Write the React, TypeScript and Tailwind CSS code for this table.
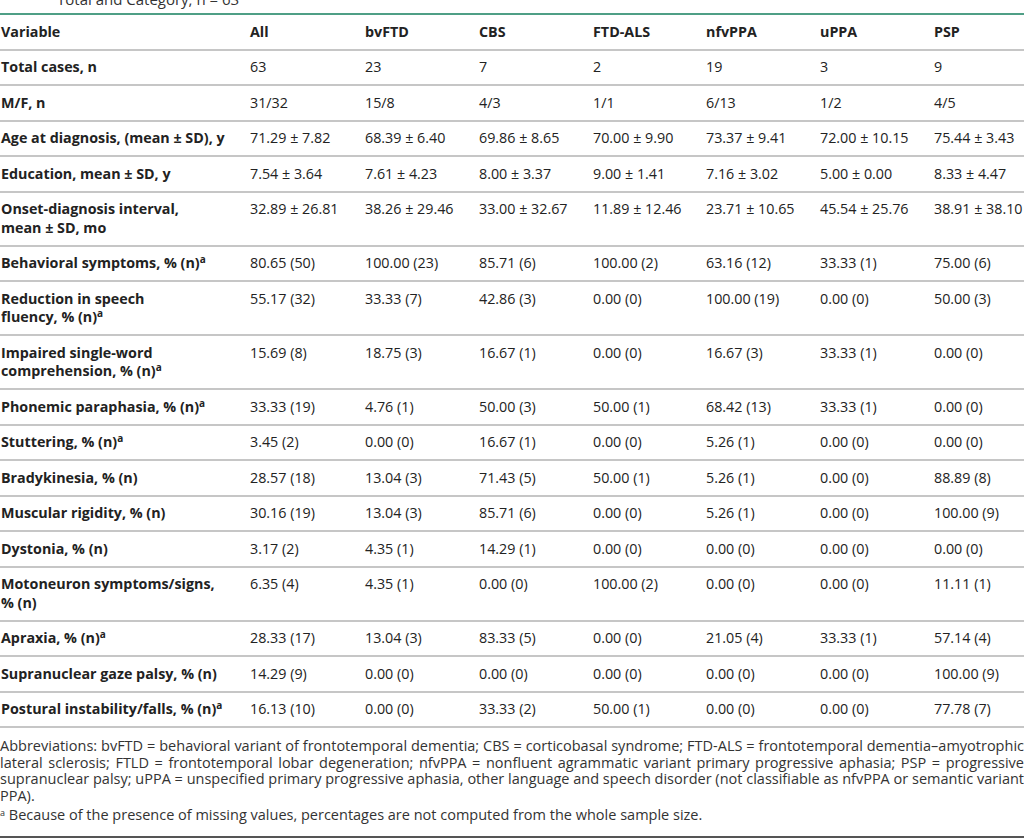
const cols = ["Variable", "All", "bvFTD", "CBS", "FTD-ALS", "nfvPPA", "uPPA", "PSP"];

type Row = { label: string[]; sup?: boolean; values: string[] };

const rows: Row[] = [
  { label: ["Total cases, n"], values: ["63", "23", "7", "2", "19", "3", "9"] },
  { label: ["M/F, n"], values: ["31/32", "15/8", "4/3", "1/1", "6/13", "1/2", "4/5"] },
  {
    label: ["Age at diagnosis, (mean ± SD), y"],
    values: ["71.29 ± 7.82", "68.39 ± 6.40", "69.86 ± 8.65", "70.00 ± 9.90", "73.37 ± 9.41", "72.00 ± 10.15", "75.44 ± 3.43"],
  },
  {
    label: ["Education, mean ± SD, y"],
    values: ["7.54 ± 3.64", "7.61 ± 4.23", "8.00 ± 3.37", "9.00 ± 1.41", "7.16 ± 3.02", "5.00 ± 0.00", "8.33 ± 4.47"],
  },
  {
    label: ["Onset-diagnosis interval,", "mean ± SD, mo"],
    values: ["32.89 ± 26.81", "38.26 ± 29.46", "33.00 ± 32.67", "11.89 ± 12.46", "23.71 ± 10.65", "45.54 ± 25.76", "38.91 ± 38.10"],
  },
  {
    label: ["Behavioral symptoms, % (n)"],
    sup: true,
    values: ["80.65 (50)", "100.00 (23)", "85.71 (6)", "100.00 (2)", "63.16 (12)", "33.33 (1)", "75.00 (6)"],
  },
  {
    label: ["Reduction in speech", "fluency, % (n)"],
    sup: true,
    values: ["55.17 (32)", "33.33 (7)", "42.86 (3)", "0.00 (0)", "100.00 (19)", "0.00 (0)", "50.00 (3)"],
  },
  {
    label: ["Impaired single-word", "comprehension, % (n)"],
    sup: true,
    values: ["15.69 (8)", "18.75 (3)", "16.67 (1)", "0.00 (0)", "16.67 (3)", "33.33 (1)", "0.00 (0)"],
  },
  {
    label: ["Phonemic paraphasia, % (n)"],
    sup: true,
    values: ["33.33 (19)", "4.76 (1)", "50.00 (3)", "50.00 (1)", "68.42 (13)", "33.33 (1)", "0.00 (0)"],
  },
  {
    label: ["Stuttering, % (n)"],
    sup: true,
    values: ["3.45 (2)", "0.00 (0)", "16.67 (1)", "0.00 (0)", "5.26 (1)", "0.00 (0)", "0.00 (0)"],
  },
  {
    label: ["Bradykinesia, % (n)"],
    values: ["28.57 (18)", "13.04 (3)", "71.43 (5)", "50.00 (1)", "5.26 (1)", "0.00 (0)", "88.89 (8)"],
  },
  {
    label: ["Muscular rigidity, % (n)"],
    values: ["30.16 (19)", "13.04 (3)", "85.71 (6)", "0.00 (0)", "5.26 (1)", "0.00 (0)", "100.00 (9)"],
  },
  {
    label: ["Dystonia, % (n)"],
    values: ["3.17 (2)", "4.35 (1)", "14.29 (1)", "0.00 (0)", "0.00 (0)", "0.00 (0)", "0.00 (0)"],
  },
  {
    label: ["Motoneuron symptoms/signs,", "% (n)"],
    values: ["6.35 (4)", "4.35 (1)", "0.00 (0)", "100.00 (2)", "0.00 (0)", "0.00 (0)", "11.11 (1)"],
  },
  {
    label: ["Apraxia, % (n)"],
    sup: true,
    values: ["28.33 (17)", "13.04 (3)", "83.33 (5)", "0.00 (0)", "21.05 (4)", "33.33 (1)", "57.14 (4)"],
  },
  {
    label: ["Supranuclear gaze palsy, % (n)"],
    values: ["14.29 (9)", "0.00 (0)", "0.00 (0)", "0.00 (0)", "0.00 (0)", "0.00 (0)", "100.00 (9)"],
  },
  {
    label: ["Postural instability/falls, % (n)"],
    sup: true,
    values: ["16.13 (10)", "0.00 (0)", "33.33 (2)", "50.00 (1)", "0.00 (0)", "0.00 (0)", "77.78 (7)"],
  },
];

const grid = "grid grid-cols-[249px_115px_114px_114px_113px_114px_114px_1fr]";

const App = () => {
  return (
    <div className="w-[1024px] h-[839px] overflow-hidden bg-white text-[#222] font-['Open_Sans',sans-serif]">
      {/* caption, cut off by the top of the shot */}
      <div className="-mt-[11px] h-[20px] pl-[57px] text-[15px] leading-[20px] text-[#333] whitespace-nowrap">Total and Category, n = 63</div>
      <div className="mt-[4px] h-[2px] bg-[#4f9f86]" />

      <div className={`${grid} border-b-2 border-[#c6c6c6] py-[7.5px] text-[14.3px] leading-[18.5px] font-bold`}>
        {cols.map((c) => (
          <div key={c} className="pl-[1px]">{c}</div>
        ))}
      </div>

      {rows.map((r) => (
        <div key={r.label.join(" ")} className={`${grid} border-b-2 border-[#c6c6c6] py-[7.5px] text-[14.3px] leading-[18.5px]`}>
          <div className="pl-[1px] font-bold whitespace-nowrap">
            {r.label.map((l, i) => (
              <div key={i}>
                {l}
                {r.sup && i === r.label.length - 1 && <sup className="text-[10px] font-bold">a</sup>}
              </div>
            ))}
          </div>
          {r.values.map((v, i) => (
            <div key={i} className="pl-[1px] whitespace-nowrap">{v}</div>
          ))}
        </div>
      ))}

      <div className="mt-[10px] text-[14.5px] leading-[16.5px] text-[#333]">
        <p className="text-justify">
          Abbreviations: bvFTD = behavioral variant of frontotemporal dementia; CBS = corticobasal syndrome; FTD-ALS =
          frontotemporal dementia–amyotrophic lateral sclerosis; FTLD = frontotemporal lobar degeneration; nfvPPA = nonfluent
          agrammatic variant primary progressive aphasia; PSP = progressive supranuclear palsy; uPPA = unspecified primary
          progressive aphasia, other language and speech disorder (not classifiable as nfvPPA or semantic variant PPA).
        </p>
        <p className="mt-[3px]">
          <sup className="text-[9px]">a</sup> Because of the presence of missing values, percentages are not computed from
          the whole sample size.
        </p>
      </div>
      <div className="mt-[12px] h-[2px] bg-[#555]" />
    </div>
  );
};

export default App;
